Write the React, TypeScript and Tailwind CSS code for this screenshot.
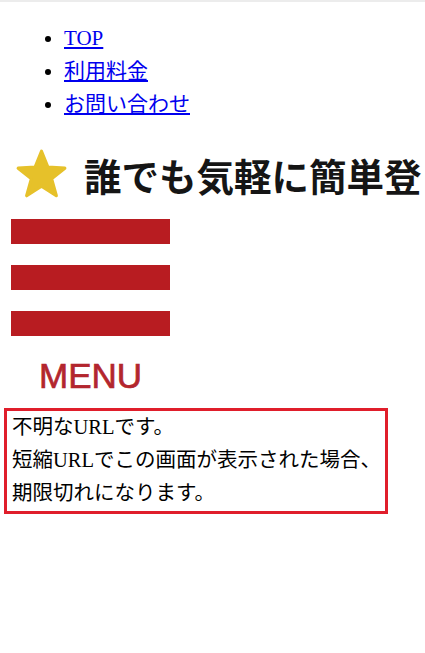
import React from "react";

const NAV_ITEMS = ["TOP", "利用料金", "お問い合わせ"];

const MESSAGE_LINES = [
  "不明なURLです。",
  "短縮URLでこの画面が表示された場合、",
  "期限切れになります。",
];

function Star() {
  return (
    <svg viewBox="0 0 100 96" className="h-[51px] w-[53px] shrink-0">
      <polygon
        points="50,6 62,36 94,38 69,58 78,90 50,72 22,90 31,58 6,38 38,36"
        fill="#e6c12a"
        stroke="#e6c12a"
        strokeWidth="6"
        strokeLinejoin="round"
      />
    </svg>
  );
}

export default function App() {
  return (
    <div className="min-h-screen border-t-2 border-[#ececec] bg-white">
      <ul
        className="mt-[20px] list-disc pl-[64px] text-[21px] leading-[33px]"
        style={{ fontFamily: '"Liberation Serif", "Noto Sans CJK JP", serif' }}
      >
        {NAV_ITEMS.map((item) => (
          <li key={item}>
            <a href="#" className="text-[#0000ee] underline">
              {item}
            </a>
          </li>
        ))}
      </ul>

      <div className="mt-[20px] flex h-[64px] items-center whitespace-nowrap pl-[15px]">
        <Star />
        <span
          className="ml-[16px] mt-[3px] text-[37.5px] font-bold leading-none text-[#151515]"
          style={{ fontFamily: '"Noto Sans CJK JP", sans-serif' }}
        >
          誰でも気軽に簡単登
        </span>
      </div>

      {/* menu button */}
      <div className="mt-[14px] flex flex-col gap-[21px] pl-[11px]">
        <div className="h-[25px] w-[159px] bg-[#b81c21]" />
        <div className="h-[25px] w-[159px] bg-[#b81c21]" />
        <div className="h-[25px] w-[159px] bg-[#b81c21]" />
      </div>
      <div
        className="mt-[22px] pl-[39px] text-[35px] leading-[35px] text-[#b3262e] [-webkit-text-stroke:0.7px_#b3262e]"
        style={{ fontFamily: '"Liberation Sans", Arial, sans-serif' }}
      >
        MENU
      </div>

      {/* message */}
      <div
        className="ml-[4px] mt-[15px] w-[384px] whitespace-nowrap border-[3px] border-[#e01e2b] px-[5px] pb-[1px] text-[20.5px] leading-[33px] text-black"
        style={{ fontFamily: '"Liberation Serif", "Noto Sans CJK JP", serif' }}
      >
        {MESSAGE_LINES.map((line) => (
          <div key={line}>{line}</div>
        ))}
      </div>
    </div>
  );
}
